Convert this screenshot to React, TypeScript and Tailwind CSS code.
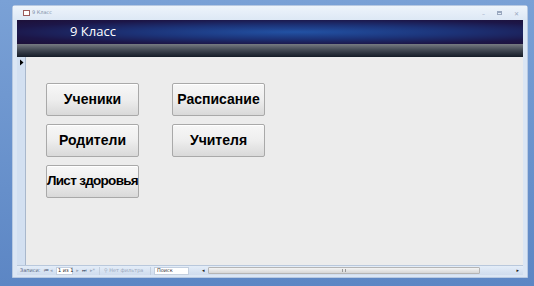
import React from "react";

const btn =
  "h-[33px] w-[93px] flex items-center justify-center border border-[#a9a9a9] rounded-[2px] bg-gradient-to-b from-[#f7f7f7] via-[#eeeeee] to-[#d9d9d9] font-bold text-black whitespace-nowrap shadow-[inset_0_1px_0_#ffffff]";

export default function App() {
  return (
    <div
      className="w-[534px] h-[286px] overflow-hidden bg-gradient-to-b from-[#7aa1d6] to-[#5c86c4] pt-[5px] pl-[12px] pr-[6px] pb-[8px]"
      style={{ fontFamily: '"DejaVu Sans", "Liberation Sans", sans-serif' }}
    >
      <div className="h-full flex flex-col bg-[#dbe6f4] border border-[#b7c9e2] rounded-t-[3px]">
        {/* Title bar */}
        <div className="h-[14px] flex items-center pl-[10px] pr-[8px] bg-gradient-to-b from-[#eef4fb] to-[#dde8f5]">
          <div className="w-[7px] h-[6px] border border-[#9a5a5a] bg-white mr-[2px]" />
          <span className="text-[5px] text-[#8090a8]">9 Класс</span>
          <div className="ml-auto flex items-center gap-[12px] text-[6px] text-[#9aa8bf]">
            <span>–</span>
            <span className="w-[5px] h-[4px] border-t-2 border border-[#9aa8bf]" />
            <span>✕</span>
          </div>
        </div>

        <div className="flex-1 flex flex-col px-[4px]">
          {/* Header */}
          <div className="h-[24px] flex items-center pl-[53px] bg-[radial-gradient(ellipse_at_55%_50%,#2252a4_0%,#1c3378_40%,#1c1648_75%,#1d1038_100%)]">
            <span className="text-[13px] text-white" style={{ fontFamily: '"Open Sans", "DejaVu Sans", sans-serif' }}>
              9 Класс
            </span>
          </div>
          <div className="h-[13px] bg-gradient-to-b from-[#777b82] via-[#3f4550] to-[#151c27]" />

          {/* Content */}
          <div className="flex-1 flex">
            <div className="w-[9px] bg-[#d3e0f1] border-r border-[#a9b8cc] pt-[2px] pl-[2px]">
              <svg width="5" height="7" viewBox="0 0 5 7">
                <path d="M1 0.5 L4.5 3.5 L1 6.5 Z" fill="#000" />
              </svg>
            </div>
            <div
              className="flex-1 bg-[#ececec] pt-[26px] pl-[20px]"
              style={{ fontFamily: '"Liberation Sans", Arial, sans-serif' }}
            >
              <div className="grid grid-cols-[93px_93px] gap-x-[33px] gap-y-[8px] text-[14px]">
                <div className={btn + " border-[#7f9db9] shadow-[inset_0_0_0_1px_#c6d8ec]"}>Ученики</div>
                <div className={btn}>Расписание</div>
                <div className={btn}>Родители</div>
                <div className={btn}>Учителя</div>
                <div className={btn + " text-[13.5px] tracking-[-0.7px]"}>Лист здоровья</div>
              </div>
            </div>
          </div>

          {/* Navigation bar */}
          <div className="h-[10px] flex items-center whitespace-nowrap bg-gradient-to-b from-[#e4edf8] to-[#cfdcee] text-[5px] text-[#55657d] border-t border-[#b9c8dc]">
            <span className="pl-[3px] w-[27px]">Записи:</span>
            <span className="w-[6px] text-[#44546c]">⏮</span>
            <span className="w-[6px] text-[#9aa8bc]">◂</span>
            <span className="w-[17px] h-[8px] bg-white border border-[#c3cfdf] flex items-center pl-[1px] text-[#222]">1 из 1</span>
            <span className="w-[9px] text-center text-[#9aa8bc]">▸</span>
            <span className="w-[8px] text-[#44546c]">⏭</span>
            <span className="w-[9px] text-[#9aa8bc]">▸*</span>
            <span className="w-[52px] h-[8px] flex items-center pl-[4px] text-[#9aa8bc] border-l border-r border-[#c3cfdf]">
              ⚲ Нет фильтра
            </span>
            <span className="ml-[3px] w-[35px] h-[8px] bg-white border border-[#c3cfdf] flex items-center pl-[2px] text-[#333]">
              Поиск
            </span>
            <span className="ml-[13px] w-[6px] text-[#222]">◂</span>
            <div className="w-[272px] h-[7px] bg-gradient-to-b from-[#f4f4f4] to-[#d6d6d6] border border-[#b5b5b5] rounded-[1px] flex items-center justify-center">
              <span className="w-[4px] h-[3px] border-x border-[#999]" />
            </div>
            <div className="flex-1 flex justify-end pr-[4px] text-[#222]">▸</div>
          </div>
          <div className="h-[2px]" />
        </div>
      </div>
    </div>
  );
}
